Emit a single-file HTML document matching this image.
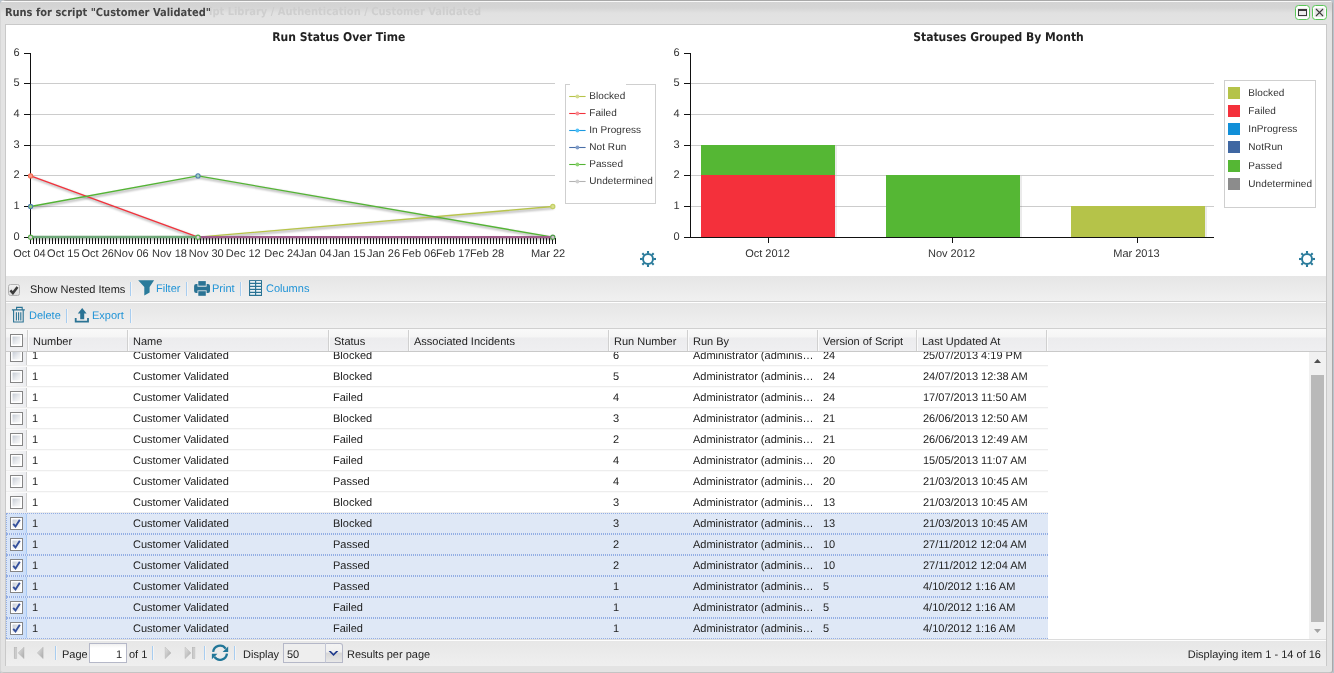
<!DOCTYPE html>
<html lang="en"><head><meta charset="utf-8"><title>Runs for script "Customer Validated"</title>
<style>
html,body{margin:0;padding:0}
body{width:1334px;height:673px;overflow:hidden;position:relative;background:#b9c3cc;font-family:"Liberation Sans",Arial,Helvetica,sans-serif;font-size:11px;color:#222;text-rendering:geometricPrecision}
div,span{box-sizing:border-box}
.win{position:absolute;left:0;top:0;width:1333px;height:673px;background:#e3e3e3;border-radius:5px 5px 3px 3px;overflow:hidden;box-shadow:inset 1px 0 0 #d6d6d6,inset -1px 0 0 #a8a8a8,inset 0 1px 0 #a9a9a9,inset 0 -1px 0 #c4c4c4;will-change:transform}
.whead{position:absolute;left:1px;top:1px;width:1331px;height:23px;background:linear-gradient(#f8f8f8 0,#f8f8f8 1px,#d3d3d3 1px,#d5d5d5 7px,#e1e1e1 12px,#e3e3e3 23px);}
.wtitle{position:absolute;left:0;top:0;display:block}
.ghost{position:absolute;left:208px;top:4px;font:bold 11px "DejaVu Sans Condensed","Liberation Sans",sans-serif;color:#cecece;white-space:nowrap}
.tool{position:absolute;top:4px;width:15px;height:15px;border:1px solid #5bc658;border-radius:3.5px;background:#fff}
.panel{position:absolute;left:5px;top:24px;width:1322px;height:642px;background:#fff;border:1px solid #c9c9c9;border-bottom:none;overflow:hidden}
.charts{position:absolute;left:0;top:0;display:block}
.tb{position:absolute;left:0;width:1320px;background:linear-gradient(#e6e6e6,#f0f0f0);white-space:nowrap}
.tb1{top:251px;height:26px;border-bottom:1px solid #d2d2d2}
.tb2{top:277px;height:27px;border-top:1px solid #fff;border-bottom:1px solid #d0d0d0}
.tb span.t{position:absolute;color:#1f93d6;font-size:11px;line-height:13px}
.tb span.k{position:absolute;color:#222;font-size:11px;line-height:13px}
.tb i.s{position:absolute;box-sizing:border-box;width:2px;height:14px;border-left:1px solid #a8cdf0;border-right:1px solid #f4f4f4}
.tb svg{position:absolute}
.chk{position:absolute;width:12px;height:12px;border:1px solid #b2b2b2;border-radius:2.5px;background:linear-gradient(#f0f0f0,#dedede)}
.ghead{position:absolute;left:0;top:304px;width:1320px;height:23px;background:linear-gradient(#f9f9f9 0,#f5f5f5 8px,#ececee 9px,#efeff1 100%);border-bottom:1px solid #c9c9c9}
.hc{position:absolute;top:1px;height:21px;border-right:1px solid #d0d0d0;box-shadow:1px 0 0 #fbfbfb}
.ht{position:absolute;left:5px;top:6px;line-height:13px;white-space:nowrap;color:#222}
.c>span.cb,.cb{display:block;position:absolute;left:4px;right:auto;top:4px;width:13px;height:13px;border:1px solid #858585;background:linear-gradient(135deg,#c6ccd5 15%,#e9ebee 55%,#fafafa 85%);box-shadow:inset 0 0 0 1.5px #fff}
.cb.hcb{top:4px}
.cb.on{background:linear-gradient(135deg,#c6ccd5 15%,#e9ebee 55%,#fafafa 85%)}
.c.c0 .cb{top:3px}
.cb svg{position:absolute;left:0;top:0}
.gbody{position:absolute;left:0;top:327px;width:1320px;height:288px;background:#fff;overflow:hidden;border-bottom:1px solid #dcdcdc}
.row{position:absolute;left:0;width:1042px;height:21px;border-bottom:1px solid #ededed;border-top:1px solid #fafafa;background:#fff}
.row.sel{background:#dfe8f6;border-top:1px dotted #93aee4;border-bottom:1px dotted #93aee4;z-index:2}
.row.sel:before{content:'';position:absolute;left:0;top:0;height:19px;border-left:1px dotted #93aee4;z-index:3}
.c{position:absolute;top:-1px;height:21px;overflow:hidden;white-space:nowrap}
.c>span{position:absolute;left:4px;right:5px;top:5px;line-height:13px;overflow:hidden;text-overflow:ellipsis;white-space:nowrap;color:#222}
.c0{background:linear-gradient(90deg,#f9f9f9,#ecedf0);border-right:1px solid #d0d0d0;top:0;height:19px}
.row.sel .c0{background:linear-gradient(90deg,#d9e5f7,#cadefa);border-right:1px solid #a9c9f3;top:0;height:19px}
.row.sel .c0 .cb{top:3px}
.sbar{position:absolute;left:1303px;top:0;width:17px;height:288px;background:#f1f1f1}
.thumb{position:absolute;left:2px;top:23px;width:13px;height:247px;background:#b9b9b9}
.pbar{position:absolute;left:0;top:615px;width:1320px;height:26px;background:linear-gradient(#e7e7e7,#efefef);border-top:1px solid #fdfdfd}
.pbar span{position:absolute;top:8px;line-height:13px;font-size:11px;color:#222;white-space:nowrap}
.pbar i.s{position:absolute;box-sizing:border-box;top:5px;width:2px;height:14px;border-left:1px solid #a8cdf0;border-right:1px solid #f4f4f4;}
.pbar svg{position:absolute}
.pin{position:absolute;left:83px;top:2px;width:38px;height:20px;border:1px solid #b5b8c8;background:linear-gradient(#f0f0f0 0,#fff 4px);text-align:right;padding:5px 4px 0 0;font-size:11px;line-height:13px}
.combo{position:absolute;left:277px;top:2px;width:42px;height:20px;border:1px solid #b5b8c8;border-right:none;background:#eeeeee;padding:5px 0 0 3px;font-size:11px;line-height:13px}
.trig{position:absolute;left:319px;top:2px;width:18px;height:20px;border:1px solid #b5b8c8;border-left-color:#c3c7d6;border-radius:0 3px 0 0;background:linear-gradient(#f3f3f3 0,#f0f0f0 45%,#d6d6d6 50%,#e8e8e8 100%)}
</style></head>
<body>
<div class="win">
<div class="whead">
<div class="ghost">ipt Library / Authentication / Customer Validated</div>
<svg class="wtitle" width="240" height="22" viewBox="0 0 240 22"><text x="3.9" y="15" textLength="206" lengthAdjust="spacingAndGlyphs" font-family="DejaVu Sans Condensed, Liberation Sans, sans-serif" font-weight="bold" font-size="11" fill="#444">Runs for script "Customer Validated"</text></svg>
<div class="tool" style="left:1294px"><svg width="13" height="13" viewBox="0 0 13 13"><rect x="1.5" y="2" width="10" height="9" fill="#ececec"/><rect x="2.5" y="3.5" width="8" height="6" fill="#ececec" stroke="#3a3a3a" stroke-width="1"/><rect x="2" y="3" width="9" height="2" fill="#3a3a3a"/></svg></div>
<div class="tool" style="left:1311px"><svg width="13" height="13" viewBox="0 0 13 13"><rect x="1.5" y="2" width="10" height="9" fill="#e6e6e6"/><path d="M3 3 L10 10 M10 3 L3 10" stroke="#3a3a3a" stroke-width="1.1" fill="none"/></svg></div>
</div>
<div class="panel">
<svg class="charts" width="1320" height="251" viewBox="6 25 1320 251">
<defs><filter id="sh" x="-5%" y="-20%" width="110%" height="140%"><feGaussianBlur stdDeviation="0.9"/></filter></defs>
<g shape-rendering="crispEdges">
<rect x="31" y="206" width="524" height="1" fill="#cccccc"/>
<rect x="31" y="175" width="524" height="1" fill="#cccccc"/>
<rect x="31" y="145" width="524" height="1" fill="#cccccc"/>
<rect x="31" y="114" width="524" height="1" fill="#cccccc"/>
<rect x="31" y="83" width="524" height="1" fill="#cccccc"/>
<rect x="24" y="237" width="7" height="1" fill="#111"/>
<rect x="24" y="206" width="7" height="1" fill="#111"/>
<rect x="24" y="175" width="7" height="1" fill="#111"/>
<rect x="24" y="145" width="7" height="1" fill="#111"/>
<rect x="24" y="114" width="7" height="1" fill="#111"/>
<rect x="24" y="83" width="7" height="1" fill="#111"/>
<rect x="24" y="53" width="7" height="1" fill="#111"/>
<rect x="30" y="53" width="1" height="185" fill="#111"/>
<rect x="30" y="238" width="1" height="6" fill="#111"/>
<rect x="33" y="238" width="1" height="6" fill="#111"/>
<rect x="36" y="238" width="1" height="6" fill="#111"/>
<rect x="39" y="238" width="1" height="6" fill="#111"/>
<rect x="42" y="238" width="1" height="6" fill="#111"/>
<rect x="45" y="238" width="1" height="6" fill="#111"/>
<rect x="49" y="238" width="1" height="6" fill="#111"/>
<rect x="52" y="238" width="1" height="6" fill="#111"/>
<rect x="55" y="238" width="1" height="6" fill="#111"/>
<rect x="58" y="238" width="1" height="6" fill="#111"/>
<rect x="61" y="238" width="1" height="6" fill="#111"/>
<rect x="64" y="238" width="1" height="6" fill="#111"/>
<rect x="67" y="238" width="1" height="6" fill="#111"/>
<rect x="70" y="238" width="1" height="6" fill="#111"/>
<rect x="73" y="238" width="1" height="6" fill="#111"/>
<rect x="76" y="238" width="1" height="6" fill="#111"/>
<rect x="79" y="238" width="1" height="6" fill="#111"/>
<rect x="82" y="238" width="1" height="6" fill="#111"/>
<rect x="86" y="238" width="1" height="6" fill="#111"/>
<rect x="89" y="238" width="1" height="6" fill="#111"/>
<rect x="92" y="238" width="1" height="6" fill="#111"/>
<rect x="95" y="238" width="1" height="6" fill="#111"/>
<rect x="98" y="238" width="1" height="6" fill="#111"/>
<rect x="101" y="238" width="1" height="6" fill="#111"/>
<rect x="104" y="238" width="1" height="6" fill="#111"/>
<rect x="107" y="238" width="1" height="6" fill="#111"/>
<rect x="110" y="238" width="1" height="6" fill="#111"/>
<rect x="113" y="238" width="1" height="6" fill="#111"/>
<rect x="116" y="238" width="1" height="6" fill="#111"/>
<rect x="120" y="238" width="1" height="6" fill="#111"/>
<rect x="123" y="238" width="1" height="6" fill="#111"/>
<rect x="126" y="238" width="1" height="6" fill="#111"/>
<rect x="129" y="238" width="1" height="6" fill="#111"/>
<rect x="132" y="238" width="1" height="6" fill="#111"/>
<rect x="135" y="238" width="1" height="6" fill="#111"/>
<rect x="138" y="238" width="1" height="6" fill="#111"/>
<rect x="141" y="238" width="1" height="6" fill="#111"/>
<rect x="144" y="238" width="1" height="6" fill="#111"/>
<rect x="147" y="238" width="1" height="6" fill="#111"/>
<rect x="150" y="238" width="1" height="6" fill="#111"/>
<rect x="154" y="238" width="1" height="6" fill="#111"/>
<rect x="157" y="238" width="1" height="6" fill="#111"/>
<rect x="160" y="238" width="1" height="6" fill="#111"/>
<rect x="163" y="238" width="1" height="6" fill="#111"/>
<rect x="166" y="238" width="1" height="6" fill="#111"/>
<rect x="169" y="238" width="1" height="6" fill="#111"/>
<rect x="172" y="238" width="1" height="6" fill="#111"/>
<rect x="175" y="238" width="1" height="6" fill="#111"/>
<rect x="178" y="238" width="1" height="6" fill="#111"/>
<rect x="181" y="238" width="1" height="6" fill="#111"/>
<rect x="184" y="238" width="1" height="6" fill="#111"/>
<rect x="187" y="238" width="1" height="6" fill="#111"/>
<rect x="191" y="238" width="1" height="6" fill="#111"/>
<rect x="194" y="238" width="1" height="6" fill="#111"/>
<rect x="197" y="238" width="1" height="6" fill="#111"/>
<rect x="200" y="238" width="1" height="6" fill="#111"/>
<rect x="203" y="238" width="1" height="6" fill="#111"/>
<rect x="206" y="238" width="1" height="6" fill="#111"/>
<rect x="209" y="238" width="1" height="6" fill="#111"/>
<rect x="212" y="238" width="1" height="6" fill="#111"/>
<rect x="215" y="238" width="1" height="6" fill="#111"/>
<rect x="218" y="238" width="1" height="6" fill="#111"/>
<rect x="221" y="238" width="1" height="6" fill="#111"/>
<rect x="225" y="238" width="1" height="6" fill="#111"/>
<rect x="228" y="238" width="1" height="6" fill="#111"/>
<rect x="231" y="238" width="1" height="6" fill="#111"/>
<rect x="234" y="238" width="1" height="6" fill="#111"/>
<rect x="237" y="238" width="1" height="6" fill="#111"/>
<rect x="240" y="238" width="1" height="6" fill="#111"/>
<rect x="243" y="238" width="1" height="6" fill="#111"/>
<rect x="246" y="238" width="1" height="6" fill="#111"/>
<rect x="249" y="238" width="1" height="6" fill="#111"/>
<rect x="252" y="238" width="1" height="6" fill="#111"/>
<rect x="255" y="238" width="1" height="6" fill="#111"/>
<rect x="259" y="238" width="1" height="6" fill="#111"/>
<rect x="262" y="238" width="1" height="6" fill="#111"/>
<rect x="265" y="238" width="1" height="6" fill="#111"/>
<rect x="268" y="238" width="1" height="6" fill="#111"/>
<rect x="271" y="238" width="1" height="6" fill="#111"/>
<rect x="274" y="238" width="1" height="6" fill="#111"/>
<rect x="277" y="238" width="1" height="6" fill="#111"/>
<rect x="280" y="238" width="1" height="6" fill="#111"/>
<rect x="283" y="238" width="1" height="6" fill="#111"/>
<rect x="286" y="238" width="1" height="6" fill="#111"/>
<rect x="289" y="238" width="1" height="6" fill="#111"/>
<rect x="292" y="238" width="1" height="6" fill="#111"/>
<rect x="296" y="238" width="1" height="6" fill="#111"/>
<rect x="299" y="238" width="1" height="6" fill="#111"/>
<rect x="302" y="238" width="1" height="6" fill="#111"/>
<rect x="305" y="238" width="1" height="6" fill="#111"/>
<rect x="308" y="238" width="1" height="6" fill="#111"/>
<rect x="311" y="238" width="1" height="6" fill="#111"/>
<rect x="314" y="238" width="1" height="6" fill="#111"/>
<rect x="317" y="238" width="1" height="6" fill="#111"/>
<rect x="320" y="238" width="1" height="6" fill="#111"/>
<rect x="323" y="238" width="1" height="6" fill="#111"/>
<rect x="326" y="238" width="1" height="6" fill="#111"/>
<rect x="330" y="238" width="1" height="6" fill="#111"/>
<rect x="333" y="238" width="1" height="6" fill="#111"/>
<rect x="336" y="238" width="1" height="6" fill="#111"/>
<rect x="339" y="238" width="1" height="6" fill="#111"/>
<rect x="342" y="238" width="1" height="6" fill="#111"/>
<rect x="345" y="238" width="1" height="6" fill="#111"/>
<rect x="348" y="238" width="1" height="6" fill="#111"/>
<rect x="351" y="238" width="1" height="6" fill="#111"/>
<rect x="354" y="238" width="1" height="6" fill="#111"/>
<rect x="357" y="238" width="1" height="6" fill="#111"/>
<rect x="360" y="238" width="1" height="6" fill="#111"/>
<rect x="364" y="238" width="1" height="6" fill="#111"/>
<rect x="367" y="238" width="1" height="6" fill="#111"/>
<rect x="370" y="238" width="1" height="6" fill="#111"/>
<rect x="373" y="238" width="1" height="6" fill="#111"/>
<rect x="376" y="238" width="1" height="6" fill="#111"/>
<rect x="379" y="238" width="1" height="6" fill="#111"/>
<rect x="382" y="238" width="1" height="6" fill="#111"/>
<rect x="385" y="238" width="1" height="6" fill="#111"/>
<rect x="388" y="238" width="1" height="6" fill="#111"/>
<rect x="391" y="238" width="1" height="6" fill="#111"/>
<rect x="394" y="238" width="1" height="6" fill="#111"/>
<rect x="397" y="238" width="1" height="6" fill="#111"/>
<rect x="401" y="238" width="1" height="6" fill="#111"/>
<rect x="404" y="238" width="1" height="6" fill="#111"/>
<rect x="407" y="238" width="1" height="6" fill="#111"/>
<rect x="410" y="238" width="1" height="6" fill="#111"/>
<rect x="413" y="238" width="1" height="6" fill="#111"/>
<rect x="416" y="238" width="1" height="6" fill="#111"/>
<rect x="419" y="238" width="1" height="6" fill="#111"/>
<rect x="422" y="238" width="1" height="6" fill="#111"/>
<rect x="425" y="238" width="1" height="6" fill="#111"/>
<rect x="428" y="238" width="1" height="6" fill="#111"/>
<rect x="431" y="238" width="1" height="6" fill="#111"/>
<rect x="435" y="238" width="1" height="6" fill="#111"/>
<rect x="438" y="238" width="1" height="6" fill="#111"/>
<rect x="441" y="238" width="1" height="6" fill="#111"/>
<rect x="444" y="238" width="1" height="6" fill="#111"/>
<rect x="447" y="238" width="1" height="6" fill="#111"/>
<rect x="450" y="238" width="1" height="6" fill="#111"/>
<rect x="453" y="238" width="1" height="6" fill="#111"/>
<rect x="456" y="238" width="1" height="6" fill="#111"/>
<rect x="459" y="238" width="1" height="6" fill="#111"/>
<rect x="462" y="238" width="1" height="6" fill="#111"/>
<rect x="465" y="238" width="1" height="6" fill="#111"/>
<rect x="468" y="238" width="1" height="6" fill="#111"/>
<rect x="472" y="238" width="1" height="6" fill="#111"/>
<rect x="475" y="238" width="1" height="6" fill="#111"/>
<rect x="478" y="238" width="1" height="6" fill="#111"/>
<rect x="481" y="238" width="1" height="6" fill="#111"/>
<rect x="484" y="238" width="1" height="6" fill="#111"/>
<rect x="487" y="238" width="1" height="6" fill="#111"/>
<rect x="490" y="238" width="1" height="6" fill="#111"/>
<rect x="493" y="238" width="1" height="6" fill="#111"/>
<rect x="496" y="238" width="1" height="6" fill="#111"/>
<rect x="499" y="238" width="1" height="6" fill="#111"/>
<rect x="502" y="238" width="1" height="6" fill="#111"/>
<rect x="506" y="238" width="1" height="6" fill="#111"/>
<rect x="509" y="238" width="1" height="6" fill="#111"/>
<rect x="512" y="238" width="1" height="6" fill="#111"/>
<rect x="515" y="238" width="1" height="6" fill="#111"/>
<rect x="518" y="238" width="1" height="6" fill="#111"/>
<rect x="521" y="238" width="1" height="6" fill="#111"/>
<rect x="524" y="238" width="1" height="6" fill="#111"/>
<rect x="527" y="238" width="1" height="6" fill="#111"/>
<rect x="530" y="238" width="1" height="6" fill="#111"/>
<rect x="533" y="238" width="1" height="6" fill="#111"/>
<rect x="536" y="238" width="1" height="6" fill="#111"/>
<rect x="540" y="238" width="1" height="6" fill="#111"/>
<rect x="543" y="238" width="1" height="6" fill="#111"/>
<rect x="546" y="238" width="1" height="6" fill="#111"/>
<rect x="549" y="238" width="1" height="6" fill="#111"/>
<rect x="552" y="238" width="1" height="6" fill="#111"/>
<rect x="555" y="238" width="1" height="6" fill="#111"/>
</g>
<g font-family="Liberation Sans, Arial, sans-serif" font-size="11" fill="#333" text-anchor="end">
<text x="19.6" y="239.8">0</text>
<text x="19.6" y="208.8">1</text>
<text x="19.6" y="177.8">2</text>
<text x="19.6" y="147.8">3</text>
<text x="19.6" y="116.8">4</text>
<text x="19.6" y="85.8">5</text>
<text x="19.6" y="55.8">6</text>
</g>
<g font-family="Liberation Sans, Arial, sans-serif" font-size="11" fill="#333" text-anchor="middle">
<text x="29.5" y="257">Oct 04</text>
<text x="63.3" y="257">Oct 15</text>
<text x="97.7" y="257">Oct 26</text>
<text x="131.3" y="257">Nov 06</text>
<text x="169.5" y="257">Nov 18</text>
<text x="206.3" y="257">Nov 30</text>
<text x="243.3" y="257">Dec 12</text>
<text x="281.8" y="257">Dec 24</text>
<text x="315.2" y="257">Jan 04</text>
<text x="349" y="257">Jan 15</text>
<text x="383.5" y="257">Jan 26</text>
<text x="419.2" y="257">Feb 06</text>
<text x="453.2" y="257">Feb 17</text>
<text x="487" y="257">Feb 28</text>
<text x="548" y="257">Mar 22</text>
</g>
<g fill="none" stroke="#000" stroke-opacity="0.3" stroke-width="2" filter="url(#sh)" transform="translate(1,1.5)">
<polyline points="30.6,237.2 198.0,237.2 552.8,206.5"/>
<polyline points="30.6,175.9 198.0,237.2 552.8,237.2"/>
<polyline points="30.6,206.5 198.0,175.9 552.8,237.2"/>
</g>
<g fill="none" stroke-width="1.35" stroke-linejoin="round">
<polyline points="30.6,237.2 198.0,237.2 552.8,206.5" stroke="#b7c44a"/>
<polyline points="30.6,175.9 198.0,237.2 552.8,237.2" stroke="#f2323c"/>
<polyline points="30.6,237.2 198.0,237.2 552.8,237.2" stroke="#1b9ae0"/>
<polyline points="30.6,237.2 198.0,237.2 552.8,237.2" stroke="#4a6fa8"/>
<polyline points="30.6,206.5 198.0,175.9 552.8,237.2" stroke="#54b435"/>
<polyline points="30.6,237.2 198.0,237.2 552.8,237.2" stroke="#b3b3b3"/>
</g>
<line x1="30.6" y1="237" x2="198.0" y2="237" stroke="#70a87a" stroke-width="2.4"/>
<line x1="198.0" y1="237.2" x2="552.8" y2="237.2" stroke="#a05c8a" stroke-width="2.3"/>
<circle cx="30.6" cy="175.9" r="2.1" fill="#f99a8a" stroke="#f6694f" stroke-width="1.1"/>
<circle cx="30.6" cy="206.5" r="2.1" fill="#8fd070" stroke="#4f7fae" stroke-width="1.1"/>
<circle cx="30.6" cy="237.2" r="2.1" fill="#e3cfe3" stroke="#58b048" stroke-width="1.1"/>
<circle cx="198.0" cy="175.9" r="2.1" fill="#9fd0c0" stroke="#4f7fae" stroke-width="1.1"/>
<circle cx="198.0" cy="237.2" r="2.1" fill="#e3cfe3" stroke="#58b048" stroke-width="1.1"/>
<circle cx="552.8" cy="206.5" r="2.1" fill="#d9e08f" stroke="#c3cf63" stroke-width="1.1"/>
<circle cx="552.8" cy="237.2" r="2.1" fill="#cfc0cf" stroke="#4f9a48" stroke-width="1.1"/>
<g shape-rendering="crispEdges"><rect x="565.5" y="84.5" width="90" height="119" fill="#fff" stroke="#cfcfcf"/><rect x="570" y="83" width="56" height="4" fill="#fff"/></g>
<g font-family="Liberation Sans, Arial, sans-serif" font-size="10" fill="#333">
<line x1="569.2" y1="96.5" x2="585.6" y2="96.5" stroke="#b7c44a" stroke-width="1.1"/><circle cx="577.4" cy="96.5" r="1.9" fill="#d3db8e"/>
<text x="589.2" y="99.0" letter-spacing="0.08">Blocked</text>
<line x1="569.2" y1="113.5" x2="585.6" y2="113.5" stroke="#f2323c" stroke-width="1.1"/><circle cx="577.4" cy="113.5" r="1.9" fill="#f98e94"/>
<text x="589.2" y="116.0" letter-spacing="0.08">Failed</text>
<line x1="569.2" y1="130.5" x2="585.6" y2="130.5" stroke="#1b9ae0" stroke-width="1.1"/><circle cx="577.4" cy="130.5" r="1.9" fill="#4fc0f8"/>
<text x="589.2" y="133.0" letter-spacing="0.08">In Progress</text>
<line x1="569.2" y1="147.5" x2="585.6" y2="147.5" stroke="#4a6fa8" stroke-width="1.1"/><circle cx="577.4" cy="147.5" r="1.9" fill="#7f9cc8"/>
<text x="589.2" y="150.0" letter-spacing="0.08">Not Run</text>
<line x1="569.2" y1="164.5" x2="585.6" y2="164.5" stroke="#54b435" stroke-width="1.1"/><circle cx="577.4" cy="164.5" r="1.9" fill="#8fd373"/>
<text x="589.2" y="167.0" letter-spacing="0.08">Passed</text>
<line x1="569.2" y1="181.5" x2="585.6" y2="181.5" stroke="#b3b3b3" stroke-width="1.1"/><circle cx="577.4" cy="181.5" r="1.9" fill="#cfcfcf"/>
<text x="589.2" y="184.0" letter-spacing="0.08">Undetermined</text>
</g>
<g font-family="DejaVu Sans Condensed, Liberation Sans, sans-serif" font-weight="bold" font-size="12" fill="#222">
<text x="272.3" y="40.5" textLength="133" lengthAdjust="spacingAndGlyphs">Run Status Over Time</text>
<text x="913.2" y="40.5" textLength="170.6" lengthAdjust="spacingAndGlyphs">Statuses Grouped By Month</text>
</g>
<g shape-rendering="crispEdges">
<rect x="691" y="206" width="523" height="1" fill="#cccccc"/>
<rect x="691" y="175" width="523" height="1" fill="#cccccc"/>
<rect x="691" y="145" width="523" height="1" fill="#cccccc"/>
<rect x="691" y="114" width="523" height="1" fill="#cccccc"/>
<rect x="691" y="83" width="523" height="1" fill="#cccccc"/>
<rect x="684" y="237" width="7" height="1" fill="#111"/>
<rect x="684" y="206" width="7" height="1" fill="#111"/>
<rect x="684" y="175" width="7" height="1" fill="#111"/>
<rect x="684" y="145" width="7" height="1" fill="#111"/>
<rect x="684" y="114" width="7" height="1" fill="#111"/>
<rect x="684" y="83" width="7" height="1" fill="#111"/>
<rect x="684" y="53" width="7" height="1" fill="#111"/>
<rect x="690" y="53" width="1" height="185" fill="#111"/>
<rect x="690" y="237" width="524" height="1" fill="#111"/>
<rect x="768" y="238" width="1" height="5" fill="#111"/>
<rect x="952" y="238" width="1" height="5" fill="#111"/>
<rect x="1137" y="238" width="1" height="5" fill="#111"/>
</g>
<g font-family="Liberation Sans, Arial, sans-serif" font-size="11" fill="#333" text-anchor="end">
<text x="679.6" y="239.8">0</text>
<text x="679.6" y="208.8">1</text>
<text x="679.6" y="177.8">2</text>
<text x="679.6" y="147.8">3</text>
<text x="679.6" y="116.8">4</text>
<text x="679.6" y="85.8">5</text>
<text x="679.6" y="55.8">6</text>
</g>
<g shape-rendering="crispEdges">
<rect x="703" y="176" width="134" height="61" fill="#000" fill-opacity="0.08"/>
<rect x="701" y="175" width="134" height="62" fill="#f4303b"/>
<rect x="703" y="146" width="134" height="29" fill="#000" fill-opacity="0.08"/>
<rect x="701" y="145" width="134" height="30" fill="#55b734"/>
<rect x="888" y="176" width="134" height="61" fill="#000" fill-opacity="0.08"/>
<rect x="886" y="175" width="134" height="62" fill="#55b734"/>
<rect x="1073" y="207" width="134" height="30" fill="#000" fill-opacity="0.08"/>
<rect x="1071" y="206" width="134" height="31" fill="#b5c349"/>
</g>
<g font-family="Liberation Sans, Arial, sans-serif" font-size="11" fill="#333" text-anchor="middle">
<text x="767.5" y="257">Oct 2012</text>
<text x="951.5" y="257">Nov 2012</text>
<text x="1136.5" y="257">Mar 2013</text>
</g>
<g shape-rendering="crispEdges"><rect x="1224.5" y="80.5" width="91" height="127" fill="#fff" stroke="#cfcfcf"/>
<rect x="1228" y="87" width="12" height="12" fill="#b5c349"/>
<rect x="1228" y="105" width="12" height="12" fill="#f4303b"/>
<rect x="1228" y="123" width="12" height="12" fill="#118fd8"/>
<rect x="1228" y="141" width="12" height="12" fill="#3f67a2"/>
<rect x="1228" y="160" width="12" height="12" fill="#55b734"/>
<rect x="1228" y="178" width="12" height="12" fill="#8c8c8c"/>
</g>
<g font-family="Liberation Sans, Arial, sans-serif" font-size="10" fill="#333">
<text x="1248.3" y="96" letter-spacing="0.08">Blocked</text>
<text x="1248.3" y="114" letter-spacing="0.08">Failed</text>
<text x="1248.3" y="132" letter-spacing="0.08">InProgress</text>
<text x="1248.3" y="150" letter-spacing="0.08">NotRun</text>
<text x="1248.3" y="169" letter-spacing="0.08">Passed</text>
<text x="1248.3" y="187" letter-spacing="0.08">Undetermined</text>
</g>
<g transform="translate(648,259)" fill="none" stroke="#2a7b9b"><circle r="5" stroke-width="2"/><line x1="0" y1="-5.6" x2="0" y2="-8" stroke-width="2.1" transform="rotate(0)"/><line x1="0" y1="-5.6" x2="0" y2="-8" stroke-width="2.1" transform="rotate(45)"/><line x1="0" y1="-5.6" x2="0" y2="-8" stroke-width="2.1" transform="rotate(90)"/><line x1="0" y1="-5.6" x2="0" y2="-8" stroke-width="2.1" transform="rotate(135)"/><line x1="0" y1="-5.6" x2="0" y2="-8" stroke-width="2.1" transform="rotate(180)"/><line x1="0" y1="-5.6" x2="0" y2="-8" stroke-width="2.1" transform="rotate(225)"/><line x1="0" y1="-5.6" x2="0" y2="-8" stroke-width="2.1" transform="rotate(270)"/><line x1="0" y1="-5.6" x2="0" y2="-8" stroke-width="2.1" transform="rotate(315)"/></g>
<g transform="translate(1307,259)" fill="none" stroke="#2a7b9b"><circle r="5" stroke-width="2"/><line x1="0" y1="-5.6" x2="0" y2="-8" stroke-width="2.1" transform="rotate(0)"/><line x1="0" y1="-5.6" x2="0" y2="-8" stroke-width="2.1" transform="rotate(45)"/><line x1="0" y1="-5.6" x2="0" y2="-8" stroke-width="2.1" transform="rotate(90)"/><line x1="0" y1="-5.6" x2="0" y2="-8" stroke-width="2.1" transform="rotate(135)"/><line x1="0" y1="-5.6" x2="0" y2="-8" stroke-width="2.1" transform="rotate(180)"/><line x1="0" y1="-5.6" x2="0" y2="-8" stroke-width="2.1" transform="rotate(225)"/><line x1="0" y1="-5.6" x2="0" y2="-8" stroke-width="2.1" transform="rotate(270)"/><line x1="0" y1="-5.6" x2="0" y2="-8" stroke-width="2.1" transform="rotate(315)"/></g>
</svg>
<div class="tb tb1">
<span class="chk" style="left:2px;top:8px"><svg width="10" height="10" viewBox="0 0 10 10" style="left:0;top:0"><path d="M1.4 5.3 L3.9 8.1 L8.5 1.9" fill="none" stroke="#3c3c3c" stroke-width="2.5"/></svg></span>
<svg style="left:0;top:0" width="300" height="25" viewBox="6 276 300 25">
<path d="M138.2 280.2 H154.1 L149.6 287 V292.4 L144.3 295.6 V287 Z" fill="#2a7b9b"/>
<rect x="194.1" y="284.1" width="15.9" height="9" rx="2" fill="#2a7394"/>
<rect x="197.5" y="280.4" width="9.1" height="6.3" fill="#ededed"/><rect x="198.3" y="281.1" width="7.5" height="4.6" fill="#2a7394"/>
<rect x="197.5" y="290.4" width="9.1" height="6.3" fill="#ededed"/><rect x="198.3" y="291.2" width="7.5" height="4.6" fill="#2a7394"/>
<rect x="249" y="280.1" width="13" height="15.9" fill="#2a7394"/>
<g fill="#fff"><rect x="250.1" y="281.1" width="4.9" height="1.6"/><rect x="256.2" y="281.1" width="4.8" height="1.6"/><rect x="250.1" y="284.1" width="4.9" height="1.6"/><rect x="256.2" y="284.1" width="4.8" height="1.6"/><rect x="250.1" y="287.1" width="4.9" height="1.6"/><rect x="256.2" y="287.1" width="4.8" height="1.6"/><rect x="250.1" y="290.1" width="4.9" height="1.6"/><rect x="256.2" y="290.1" width="4.8" height="1.6"/><rect x="250.1" y="293.1" width="4.9" height="1.6"/><rect x="256.2" y="293.1" width="4.8" height="1.6"/></g>
</svg>
<span class="k" style="left:24px;top:8px">Show Nested Items</span>
<i class="s" style="left:124px;top:6px"></i>
<span class="t" style="left:150px;top:7px">Filter</span>
<i class="s" style="left:180px;top:6px"></i>
<span class="t" style="left:206px;top:7px">Print</span>
<i class="s" style="left:234px;top:6px"></i>
<span class="t" style="left:260px;top:7px">Columns</span>
</div>
<div class="tb tb2">
<svg style="left:0;top:0" width="300" height="25" viewBox="6 303 300 25">
<path d="M16.6 309.6 V307.4 H22.2 V309.6 M11.9 309.9 H24.8 M13.6 310.4 V322 H23.2 V310.4" fill="none" stroke="#2a7394" stroke-width="1.1"/>
<path d="M16.4 312.2 V320.6 M18.6 312.2 V320.6 M20.8 312.2 V320.6" stroke="#2a7394" stroke-width="1.1" fill="none"/>
<path d="M82.2 308 L86.6 313.4 H84.2 V319.2 H80.2 V313.4 H77.8 Z" fill="#2a7394"/>
<path d="M75.7 318 V321.6 H88 V318" fill="none" stroke="#2a7394" stroke-width="1.8"/>
</svg>
<span class="t" style="left:23px;top:7px">Delete</span>
<i class="s" style="left:60px;top:6px"></i>
<span class="t" style="left:86px;top:7px">Export</span>
<i class="s" style="left:124px;top:6px"></i>
</div>
<div class="ghead"><div class="hc" style="left:0px;width:22px"><span class="cb hcb"></span></div><div class="hc" style="left:22px;width:100px"><span class="ht">Number</span></div><div class="hc" style="left:122px;width:201px"><span class="ht">Name</span></div><div class="hc" style="left:323px;width:80px"><span class="ht">Status</span></div><div class="hc" style="left:403px;width:200px"><span class="ht">Associated Incidents</span></div><div class="hc" style="left:603px;width:79px"><span class="ht">Run Number</span></div><div class="hc" style="left:682px;width:130px"><span class="ht">Run By</span></div><div class="hc" style="left:812px;width:99px"><span class="ht">Version of Script</span></div><div class="hc" style="left:911px;width:130px"><span class="ht">Last Updated At</span></div></div>
<div class="gbody">
<div class="row" style="top:-7px"><div class="c c0" style="left:0;width:21px"><span class="cb"></span></div><div class="c" style="left:22px;width:100px"><span>1</span></div><div class="c" style="left:123px;width:201px"><span>Customer Validated</span></div><div class="c" style="left:323px;width:80px"><span>Blocked</span></div><div class="c" style="left:403px;width:200px"><span></span></div><div class="c" style="left:603px;width:79px"><span>6</span></div><div class="c" style="left:683px;width:130px"><span>Administrator (administrator)</span></div><div class="c" style="left:813px;width:99px"><span>24</span></div><div class="c" style="left:913px;width:130px"><span>25/07/2013 4:19 PM</span></div></div>
<div class="row" style="top:14px"><div class="c c0" style="left:0;width:21px"><span class="cb"></span></div><div class="c" style="left:22px;width:100px"><span>1</span></div><div class="c" style="left:123px;width:201px"><span>Customer Validated</span></div><div class="c" style="left:323px;width:80px"><span>Blocked</span></div><div class="c" style="left:403px;width:200px"><span></span></div><div class="c" style="left:603px;width:79px"><span>5</span></div><div class="c" style="left:683px;width:130px"><span>Administrator (administrator)</span></div><div class="c" style="left:813px;width:99px"><span>24</span></div><div class="c" style="left:913px;width:130px"><span>24/07/2013 12:38 AM</span></div></div>
<div class="row" style="top:35px"><div class="c c0" style="left:0;width:21px"><span class="cb"></span></div><div class="c" style="left:22px;width:100px"><span>1</span></div><div class="c" style="left:123px;width:201px"><span>Customer Validated</span></div><div class="c" style="left:323px;width:80px"><span>Failed</span></div><div class="c" style="left:403px;width:200px"><span></span></div><div class="c" style="left:603px;width:79px"><span>4</span></div><div class="c" style="left:683px;width:130px"><span>Administrator (administrator)</span></div><div class="c" style="left:813px;width:99px"><span>24</span></div><div class="c" style="left:913px;width:130px"><span>17/07/2013 11:50 AM</span></div></div>
<div class="row" style="top:56px"><div class="c c0" style="left:0;width:21px"><span class="cb"></span></div><div class="c" style="left:22px;width:100px"><span>1</span></div><div class="c" style="left:123px;width:201px"><span>Customer Validated</span></div><div class="c" style="left:323px;width:80px"><span>Blocked</span></div><div class="c" style="left:403px;width:200px"><span></span></div><div class="c" style="left:603px;width:79px"><span>3</span></div><div class="c" style="left:683px;width:130px"><span>Administrator (administrator)</span></div><div class="c" style="left:813px;width:99px"><span>21</span></div><div class="c" style="left:913px;width:130px"><span>26/06/2013 12:50 AM</span></div></div>
<div class="row" style="top:77px"><div class="c c0" style="left:0;width:21px"><span class="cb"></span></div><div class="c" style="left:22px;width:100px"><span>1</span></div><div class="c" style="left:123px;width:201px"><span>Customer Validated</span></div><div class="c" style="left:323px;width:80px"><span>Failed</span></div><div class="c" style="left:403px;width:200px"><span></span></div><div class="c" style="left:603px;width:79px"><span>2</span></div><div class="c" style="left:683px;width:130px"><span>Administrator (administrator)</span></div><div class="c" style="left:813px;width:99px"><span>21</span></div><div class="c" style="left:913px;width:130px"><span>26/06/2013 12:49 AM</span></div></div>
<div class="row" style="top:98px"><div class="c c0" style="left:0;width:21px"><span class="cb"></span></div><div class="c" style="left:22px;width:100px"><span>1</span></div><div class="c" style="left:123px;width:201px"><span>Customer Validated</span></div><div class="c" style="left:323px;width:80px"><span>Failed</span></div><div class="c" style="left:403px;width:200px"><span></span></div><div class="c" style="left:603px;width:79px"><span>4</span></div><div class="c" style="left:683px;width:130px"><span>Administrator (administrator)</span></div><div class="c" style="left:813px;width:99px"><span>20</span></div><div class="c" style="left:913px;width:130px"><span>15/05/2013 11:07 AM</span></div></div>
<div class="row" style="top:119px"><div class="c c0" style="left:0;width:21px"><span class="cb"></span></div><div class="c" style="left:22px;width:100px"><span>1</span></div><div class="c" style="left:123px;width:201px"><span>Customer Validated</span></div><div class="c" style="left:323px;width:80px"><span>Passed</span></div><div class="c" style="left:403px;width:200px"><span></span></div><div class="c" style="left:603px;width:79px"><span>4</span></div><div class="c" style="left:683px;width:130px"><span>Administrator (administrator)</span></div><div class="c" style="left:813px;width:99px"><span>20</span></div><div class="c" style="left:913px;width:130px"><span>21/03/2013 10:45 AM</span></div></div>
<div class="row" style="top:140px"><div class="c c0" style="left:0;width:21px"><span class="cb"></span></div><div class="c" style="left:22px;width:100px"><span>1</span></div><div class="c" style="left:123px;width:201px"><span>Customer Validated</span></div><div class="c" style="left:323px;width:80px"><span>Blocked</span></div><div class="c" style="left:403px;width:200px"><span></span></div><div class="c" style="left:603px;width:79px"><span>3</span></div><div class="c" style="left:683px;width:130px"><span>Administrator (administrator)</span></div><div class="c" style="left:813px;width:99px"><span>13</span></div><div class="c" style="left:913px;width:130px"><span>21/03/2013 10:45 AM</span></div></div>
<div class="row sel" style="top:161px"><div class="c c0" style="left:0;width:21px"><span class="cb on"><svg width="11" height="11" viewBox="0 0 11 11"><path d="M2.2 5.8 L4.5 8.4 L8.8 1.7" fill="none" stroke="#34509c" stroke-width="1.9"/></svg></span></div><div class="c" style="left:22px;width:100px"><span>1</span></div><div class="c" style="left:123px;width:201px"><span>Customer Validated</span></div><div class="c" style="left:323px;width:80px"><span>Blocked</span></div><div class="c" style="left:403px;width:200px"><span></span></div><div class="c" style="left:603px;width:79px"><span>3</span></div><div class="c" style="left:683px;width:130px"><span>Administrator (administrator)</span></div><div class="c" style="left:813px;width:99px"><span>13</span></div><div class="c" style="left:913px;width:130px"><span>21/03/2013 10:45 AM</span></div></div>
<div class="row sel" style="top:182px"><div class="c c0" style="left:0;width:21px"><span class="cb on"><svg width="11" height="11" viewBox="0 0 11 11"><path d="M2.2 5.8 L4.5 8.4 L8.8 1.7" fill="none" stroke="#34509c" stroke-width="1.9"/></svg></span></div><div class="c" style="left:22px;width:100px"><span>1</span></div><div class="c" style="left:123px;width:201px"><span>Customer Validated</span></div><div class="c" style="left:323px;width:80px"><span>Passed</span></div><div class="c" style="left:403px;width:200px"><span></span></div><div class="c" style="left:603px;width:79px"><span>2</span></div><div class="c" style="left:683px;width:130px"><span>Administrator (administrator)</span></div><div class="c" style="left:813px;width:99px"><span>10</span></div><div class="c" style="left:913px;width:130px"><span>27/11/2012 12:04 AM</span></div></div>
<div class="row sel" style="top:203px"><div class="c c0" style="left:0;width:21px"><span class="cb on"><svg width="11" height="11" viewBox="0 0 11 11"><path d="M2.2 5.8 L4.5 8.4 L8.8 1.7" fill="none" stroke="#34509c" stroke-width="1.9"/></svg></span></div><div class="c" style="left:22px;width:100px"><span>1</span></div><div class="c" style="left:123px;width:201px"><span>Customer Validated</span></div><div class="c" style="left:323px;width:80px"><span>Passed</span></div><div class="c" style="left:403px;width:200px"><span></span></div><div class="c" style="left:603px;width:79px"><span>2</span></div><div class="c" style="left:683px;width:130px"><span>Administrator (administrator)</span></div><div class="c" style="left:813px;width:99px"><span>10</span></div><div class="c" style="left:913px;width:130px"><span>27/11/2012 12:04 AM</span></div></div>
<div class="row sel" style="top:224px"><div class="c c0" style="left:0;width:21px"><span class="cb on"><svg width="11" height="11" viewBox="0 0 11 11"><path d="M2.2 5.8 L4.5 8.4 L8.8 1.7" fill="none" stroke="#34509c" stroke-width="1.9"/></svg></span></div><div class="c" style="left:22px;width:100px"><span>1</span></div><div class="c" style="left:123px;width:201px"><span>Customer Validated</span></div><div class="c" style="left:323px;width:80px"><span>Passed</span></div><div class="c" style="left:403px;width:200px"><span></span></div><div class="c" style="left:603px;width:79px"><span>1</span></div><div class="c" style="left:683px;width:130px"><span>Administrator (administrator)</span></div><div class="c" style="left:813px;width:99px"><span>5</span></div><div class="c" style="left:913px;width:130px"><span>4/10/2012 1:16 AM</span></div></div>
<div class="row sel" style="top:245px"><div class="c c0" style="left:0;width:21px"><span class="cb on"><svg width="11" height="11" viewBox="0 0 11 11"><path d="M2.2 5.8 L4.5 8.4 L8.8 1.7" fill="none" stroke="#34509c" stroke-width="1.9"/></svg></span></div><div class="c" style="left:22px;width:100px"><span>1</span></div><div class="c" style="left:123px;width:201px"><span>Customer Validated</span></div><div class="c" style="left:323px;width:80px"><span>Failed</span></div><div class="c" style="left:403px;width:200px"><span></span></div><div class="c" style="left:603px;width:79px"><span>1</span></div><div class="c" style="left:683px;width:130px"><span>Administrator (administrator)</span></div><div class="c" style="left:813px;width:99px"><span>5</span></div><div class="c" style="left:913px;width:130px"><span>4/10/2012 1:16 AM</span></div></div>
<div class="row sel" style="top:266px"><div class="c c0" style="left:0;width:21px"><span class="cb on"><svg width="11" height="11" viewBox="0 0 11 11"><path d="M2.2 5.8 L4.5 8.4 L8.8 1.7" fill="none" stroke="#34509c" stroke-width="1.9"/></svg></span></div><div class="c" style="left:22px;width:100px"><span>1</span></div><div class="c" style="left:123px;width:201px"><span>Customer Validated</span></div><div class="c" style="left:323px;width:80px"><span>Failed</span></div><div class="c" style="left:403px;width:200px"><span></span></div><div class="c" style="left:603px;width:79px"><span>1</span></div><div class="c" style="left:683px;width:130px"><span>Administrator (administrator)</span></div><div class="c" style="left:813px;width:99px"><span>5</span></div><div class="c" style="left:913px;width:130px"><span>4/10/2012 1:16 AM</span></div></div>
<div class="sbar"><svg width="17" height="17" viewBox="0 0 17 17" style="position:absolute;left:0;top:0"><path d="M5 11 L8.5 7 L12 11 Z" fill="#505050"/></svg><div class="thumb"></div><svg width="17" height="17" viewBox="0 0 17 17" style="position:absolute;left:0;top:270px"><path d="M5 7 L8.5 11 L12 7 Z" fill="#a3a3a3"/></svg></div>
</div>
<div class="pbar">
<svg style="left:0;top:0" width="240" height="25" viewBox="6 641 240 25"><defs><linearGradient id="pg" x1="0" y1="0" x2="1" y2="1"><stop offset="0" stop-color="#e2e2e2"/><stop offset="1" stop-color="#a8a8a8"/></linearGradient><linearGradient id="pg2" x1="0" y1="0" x2="1" y2="0"><stop offset="0" stop-color="#bdbdbd"/><stop offset="1" stop-color="#dcdcdc"/></linearGradient></defs><rect x="14.2" y="647.3" width="2.6000000000000014" height="11.200000000000045" fill="url(#pg2)" stroke="#b4b4b4" stroke-width="0.5"/><path d="M24 647.2 V658.6 L18.2 652.9000000000001 Z" fill="url(#pg)" stroke="#b4b4b4" stroke-width="0.5"/><path d="M43.1 647.2 V658.6 L37.3 652.9000000000001 Z" fill="url(#pg)" stroke="#b4b4b4" stroke-width="0.5"/><path d="M165.2 647.2 V658.6 L171 652.9000000000001 Z" fill="url(#pg)" stroke="#b4b4b4" stroke-width="0.5"/><path d="M185.1 647.2 V658.6 L190.9 652.9000000000001 Z" fill="url(#pg)" stroke="#b4b4b4" stroke-width="0.5"/><rect x="192.3" y="647.3" width="2.5999999999999943" height="11.200000000000045" fill="url(#pg2)" stroke="#b4b4b4" stroke-width="0.5"/><g transform="translate(220.05,652.8)"><g><path d="M-6.9 -0.9 A6.9 6.9 0 0 1 5.6 -4.1" fill="none" stroke="#217698" stroke-width="2.3"/><path d="M8.15 -6.4 V-0.9 H2.6 Z" fill="#217698"/></g><g transform="rotate(180)"><path d="M-6.9 -0.9 A6.9 6.9 0 0 1 5.6 -4.1" fill="none" stroke="#217698" stroke-width="2.3"/><path d="M8.15 -6.4 V-0.9 H2.6 Z" fill="#217698"/></g></g></svg>
<i class="s" style="left:49px"></i>
<span style="left:56px">Page</span>
<div class="pin">1</div>
<span style="left:123px">of 1</span>
<i class="s" style="left:146px"></i>
<i class="s" style="left:198px"></i>
<i class="s" style="left:228px"></i>
<span style="left:237px">Display</span>
<div class="combo">50</div>
<div class="trig"><svg width="15" height="18" viewBox="0 0 15 18" style="left:0;top:0"><path d="M2.6 6.9 L7.5 12.1 L12.4 6.9 L10.1 6.9 L7.5 9.7 L4.9 6.9 Z" fill="#1f3a8c"/></svg></div>
<span style="left:341px">Results per page</span>
<span style="right:5px">Displaying item 1 - 14 of 16</span>
</div>
</div>
</div>
</body></html>
